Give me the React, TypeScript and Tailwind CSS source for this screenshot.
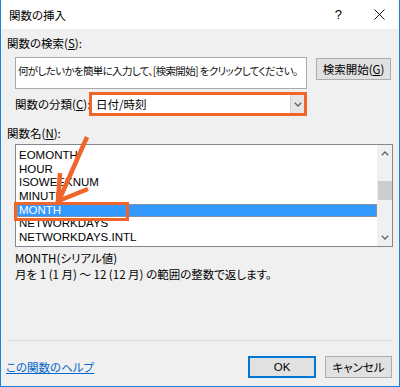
import React from "react";

const Chevron = ({ up = false }: { up?: boolean }) => (
  <svg width="8" height="5" viewBox="0 0 8 5" className="block">
    <path
      d={up ? "M0.8 4.2 L4 1 L7.2 4.2" : "M0.8 0.8 L4 4 L7.2 0.8"}
      fill="none"
      stroke="#606060"
      strokeWidth="1.3"
    />
  </svg>
);

const items = [
  "EOMONTH",
  "HOUR",
  "ISOWEEKNUM",
  "MINUTE",
  "MONTH",
  "NETWORKDAYS",
  "NETWORKDAYS.INTL",
];

export default function App() {
  return (
    <div className="relative w-[400px] h-[387px] bg-[#f0f0f0] border border-t-0 border-[#1883d7] flex flex-col overflow-hidden text-[11.5px] text-black font-['Noto_Sans_CJK_JP',sans-serif] [font-feature-settings:'palt']">
      {/* Title bar */}
      <div className="h-[29px] bg-white flex items-center pl-[8px] shrink-0">
        <span className="leading-[16px] text-[11.5px]">関数の挿入</span>
        <div className="ml-auto flex items-center">
          <span className="text-[13px] leading-[16px] mr-[32px] font-['Liberation_Sans',sans-serif]">?</span>
          <svg width="11" height="11" viewBox="0 0 11 11" className="mr-[14px]">
            <path d="M0.5 0.5 L10.5 10.5 M10.5 0.5 L0.5 10.5" stroke="#111" strokeWidth="1" />
          </svg>
        </div>
      </div>

      {/* Body */}
      <div className="flex-1 flex flex-col px-[6px]">
        <div className="mt-[6px] leading-[16px]">
          関数の検索(<span className="underline">S</span>):
        </div>

        <div className="flex items-start mt-[6px] pl-[8px]">
          <div className="w-[292px] h-[32px] border border-[#a9a9a9] bg-white pl-[2px] pt-[5px] leading-[16px] text-[#111] text-[10.5px] tracking-[-0.65px] whitespace-nowrap overflow-hidden">
            何がしたいかを簡単に入力して、[検索開始] をクリックしてください。
          </div>
          <div className="ml-[9px] mt-[1px] w-[75px] h-[22px] border border-[#adadad] bg-[#e1e1e1] flex items-center justify-center leading-[16px]">
            検索開始(<span className="underline">G</span>)
          </div>
        </div>

        <div className="flex items-center mt-[3px] pl-[8px]">
          <div className="w-[74px] leading-[16px] whitespace-nowrap">
            関数の分類(<span className="underline">C</span>):
          </div>
          <div className="w-[218px] h-[24px] border-[3px] border-[#f0652a] bg-white flex">
            <div className="flex-1 pl-[4px] leading-[18px]">日付/時刻</div>
            <div className="w-[14px] bg-[#e6e6e6] border-l border-[#d0d0d0] flex items-center justify-center">
              <Chevron />
            </div>
          </div>
        </div>

        <div className="mt-[9px] leading-[16px]">
          関数名(<span className="underline">N</span>):
        </div>

        <div className="mt-[3px] ml-[8px] w-[378px] h-[103px] border border-[#828790] bg-white flex">
          <div className="flex-1 pt-[4px] pl-[1px] font-['Liberation_Sans',sans-serif] text-[11.5px] [font-feature-settings:normal]">
            {items.map((it) =>
              it === "MONTH" ? (
                <div
                  key={it}
                  className="relative h-[13.67px] leading-[13.67px] pl-[2px] bg-[#3399ff] text-white outline outline-1 outline-dotted outline-[#d9894a] -outline-offset-1"
                >
                  {it}
                  <div className="absolute left-[-3px] top-[-2px] w-[115px] h-[19px] border-[3px] border-[#f0652a]" />
                </div>
              ) : (
                <div key={it} className="h-[13.67px] leading-[13.67px] pl-[2px]">
                  {it}
                </div>
              )
            )}
          </div>
          <div className="w-[15px] bg-[#f0f0f0] flex flex-col items-center">
            <div className="h-[17px] flex items-center justify-center">
              <Chevron up />
            </div>
            <div className="mt-[19px] w-[14px] h-[19px] bg-[#cdcdcd]" />
            <div className="mt-auto h-[17px] flex items-center justify-center">
              <Chevron />
            </div>
          </div>
        </div>

        <div className="mt-[3px] pl-[8px] leading-[16px]">
          <div>MONTH(シリアル値)</div>
          <div>月を 1 (1 月) ～ 12 (12 月) の範囲の整数で返します。</div>
        </div>

        <div className="mt-[58px] h-[1px] w-[386px] bg-[#dcdcdc]" />

        <div className="flex items-center mt-[15px]">
          <span className="-ml-[1px] text-[#0066cc] underline leading-[16px]">この関数のヘルプ</span>
          <div className="ml-auto w-[68px] h-[22px] border-2 border-[#0078d7] bg-[#e1e1e1] flex items-center justify-center leading-[16px] font-['Liberation_Sans',sans-serif]">
            OK
          </div>
          <div className="ml-[9px] mr-[1px] w-[67px] h-[22px] border border-[#adadad] bg-[#e1e1e1] flex items-center justify-center leading-[16px]">
            キャンセル
          </div>
        </div>
      </div>

      {/* Annotation arrow */}
      <svg
        className="absolute left-0 top-0 pointer-events-none"
        width="400"
        height="387"
        viewBox="0 0 400 387"
      >
        <line x1="86" y1="137" x2="59" y2="198" stroke="#f0652a" strokeWidth="4.5" />
        <polyline
          points="59,173 57,201 87,189"
          fill="none"
          stroke="#f0652a"
          strokeWidth="4.5"
          strokeLinejoin="miter"
        />
      </svg>
    </div>
  );
}
